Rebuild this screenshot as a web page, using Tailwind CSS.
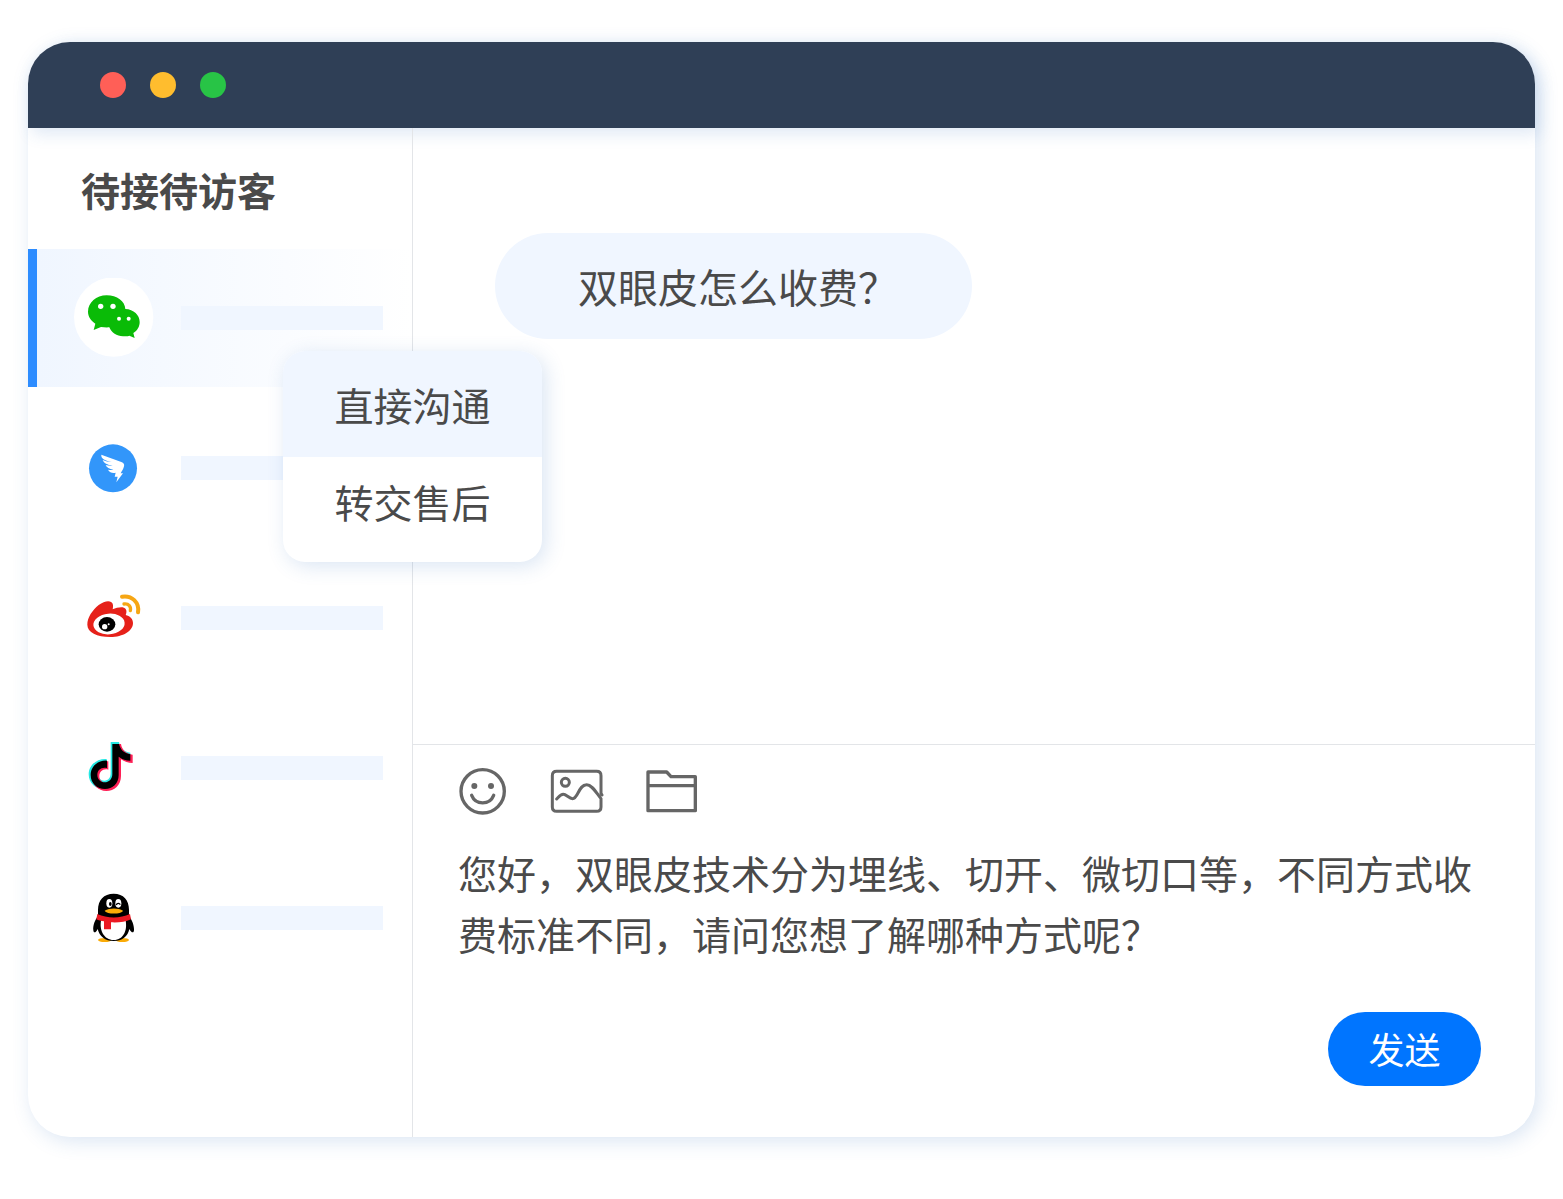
<!DOCTYPE html>
<html lang="zh-CN">
<head>
    <meta charset="UTF-8">
    <meta name="viewport" content="width=device-width, initial-scale=1.0">
    <title>在线客服</title>
    <script src="https://cdn.jsdelivr.net/npm/@tailwindcss/browser@4"></script>
</head>
<body class="bg-white font-['Noto_Sans_CJK_SC',sans-serif] text-[#4a4a4a] min-h-screen flex flex-col px-7 pt-[42px] pb-[62px]">
    <div class="flex-1 flex flex-col rounded-[42px] bg-white shadow-[4px_4px_20px_rgba(50,110,190,0.18)]">
        <!-- Title bar -->
        <header class="relative z-10 h-[86px] shrink-0 flex items-center gap-6 pl-[72px] rounded-t-[42px] bg-[#2f3f56] shadow-[4px_6px_16px_rgba(50,110,190,0.15)]">
            <span class="size-[26px] rounded-full bg-[#ff5f57]"></span>
            <span class="size-[26px] rounded-full bg-[#ffbd2e]"></span>
            <span class="size-[26px] rounded-full bg-[#28c446]"></span>
        </header>

        <div class="flex-1 flex">
            <!-- Visitor list -->
            <aside class="relative z-20 w-[385px] shrink-0 border-r border-[#e3e5e8]">
                <h1 class="h-[121px] pt-[33px] pl-[53px] text-[39px] leading-[56px] font-bold">待接待访客</h1>
                <ul class="flex flex-col gap-3">
                    <li class="relative h-[138px] flex items-center border-l-[9px] border-[#2d8cff] pl-[37px] pr-[29px] bg-linear-to-r from-[#f0f6ff] to-white">
                        <svg class="size-20 mr-[27px] shrink-0" viewBox="42 24 240 240" role="img" aria-label="微信">
                            <circle cx="161" cy="141" r="119" fill="#fff"/>
                            <path fill="#0abb07" d="M140 76c31 0 55 18 56 41 25 1 43 18 43 39 0 14-7 26-19 33l4 15-16-7c-6 2-13 2-19 2-19 0-34-11-41-27-8 1-17 0-25-1l-22 9 5-19c-13-9-22-21-22-36 0-27 25-49 56-49z"/>
                            <g fill="#fff">
                                <circle cx="122" cy="109" r="8"/>
                                <circle cx="159" cy="109" r="8"/>
                                <circle cx="177" cy="146" r="6"/>
                                <circle cx="206" cy="146" r="6"/>
                            </g>
                        </svg>
                        <span class="h-6 flex-1 bg-[#f0f6ff]"></span>

                        <!-- Row menu -->
                        <div class="absolute left-[246px] top-[102px] w-[259px] rounded-[22px] overflow-hidden bg-white text-[39px] leading-[58px] shadow-[4px_4px_20px_rgba(50,110,190,0.18)]">
                            <button type="button" class="block w-full pt-6 pb-6 bg-[#f0f6ff]">直接沟通</button>
                            <button type="button" class="block w-full pt-[15px] pb-8">转交售后</button>
                        </div>
                    </li>
                    <li class="h-[138px] flex items-center pl-[46px] pr-[29px]">
                        <svg class="size-20 mr-[27px] shrink-0" viewBox="-3 -21 240 240" role="img" aria-label="钉钉">
                            <circle cx="114" cy="100" r="72" fill="#3296fa"/>
                            <path fill="#fff" d="M79 59l60 22c7 3 10 7 8 13-2 8-6 14-10 21h7l-20 27 4-17h-9l3-12c-9 3-18-1-23-9 7 1 12 1 16 0-12-1-20-7-23-14 6 2 14 3 21 2-16-2-27-8-30-17 8 4 18 6 27 6-18-4-33-9-31-22z"/>
                        </svg>
                        <span class="h-6 flex-1 bg-[#f0f6ff]"></span>
                    </li>
                    <li class="h-[138px] flex items-center pl-[46px] pr-[29px]">
                        <svg class="size-20 mr-[27px] shrink-0" viewBox="-3 -21 240 240" role="img" aria-label="微博">
                            <path fill="#e6211a" d="M37 119c0-22 15-43 34-59 18-14 38-15 42-4 2 6 1 12 0 17 14-6 33-10 39-1 4 6 2 13 0 18 12 3 22 11 22 24 0 24-30 42-68 42-40 0-69-14-69-37z"/>
                            <ellipse cx="102" cy="117" rx="47" ry="31" fill="#fff" transform="rotate(-5 102 117)"/>
                            <ellipse cx="96" cy="118" rx="25" ry="22" fill="#000"/>
                            <circle cx="89" cy="125" r="8" fill="#fff"/>
                            <circle cx="101" cy="118" r="3" fill="#fff"/>
                            <g fill="none" stroke="#f6a614" stroke-linecap="round">
                                <path stroke-width="12" d="M141 35c29-5 53 17 48 47"/>
                                <path stroke-width="10" d="M147 57c14-2 22 8 19 20"/>
                            </g>
                        </svg>
                        <span class="h-6 flex-1 bg-[#f0f6ff]"></span>
                    </li>
                    <li class="h-[138px] flex items-center pl-[46px] pr-[29px]">
                        <svg class="size-20 mr-[27px] shrink-0" viewBox="-3 -21 240 240" role="img" aria-label="抖音">
                            <path fill="#25e8e4" d="M107 21h25c3 18 15 30 34 32v24c-13 0-24-4-34-11v52c0 27-20 45-43 45-26 0-48-18-48-45 0-28 25-48 54-46v25c-16-4-27 6-27 20 0 12 9 20 20 20 12 0 19-9 19-22z"/>
                            <path fill="#fe1f55" d="M114 27h24c3 18 15 30 35 32v25c-13 0-25-4-35-11v50c0 27-20 45-44 45-25 0-43-18-43-44 0-26 21-46 49-45v25c-16-4-27 6-27 20 0 12 9 20 20 20 12 0 21-9 21-22z"/>
                            <path fill="#000" d="M112 27h20c4 17 15 28 34 31v19c-13 0-25-4-35-12v55c0 26-18 42-41 42-24 0-43-17-43-42s21-45 49-43v22c-17-4-29 6-29 21 0 13 10 22 22 22s23-9 23-25z"/>
                        </svg>
                        <span class="h-6 flex-1 bg-[#f0f6ff]"></span>
                    </li>
                    <li class="h-[138px] flex items-center pl-[46px] pr-[29px]">
                        <svg class="size-20 mr-[27px] shrink-0" viewBox="-3 -21 240 240" role="img" aria-label="QQ">
                            <ellipse cx="89" cy="165" rx="20" ry="6" fill="#faab07"/>
                            <ellipse cx="142" cy="165" rx="20" ry="6" fill="#faab07"/>
                            <path d="M116 26c30 0 46 20 46 48v18c9 13 16 29 15 44-1 10-8 7-14-4-4 22-22 36-47 36s-43-14-48-36c-5 11-12 14-13 4-2-15 5-31 14-44V74c0-28 17-48 47-48z"/>
                            <path fill="#fff" d="M79 102h72c8 34-6 63-35 63s-45-29-37-63z"/>
                            <path fill="#eb1923" d="M67 87c30 14 68 14 98 0l3 16c-17 8-37 10-60 9v21H87v-24c-9-1-17-3-23-6z"/>
                            <path fill="#faab07" d="M89 77c15-9 41-9 55 0-5 11-48 12-55 0z"/>
                            <ellipse cx="103" cy="55" rx="9" ry="13" fill="#fff"/>
                            <ellipse cx="130" cy="55" rx="9" ry="13" fill="#fff"/>
                            <ellipse cx="106" cy="57" rx="4" ry="6"/>
                            <path fill="none" stroke="#000" stroke-width="4" d="M124 60c2-6 9-6 12-1"/>
                        </svg>
                        <span class="h-6 flex-1 bg-[#f0f6ff]"></span>
                    </li>
                </ul>
            </aside>

            <main class="flex-1 min-w-0 flex flex-col">
                <!-- Messages -->
                <section class="flex-1 pt-[105px] pl-[82px]">
                    <p class="w-fit rounded-full bg-[#f0f6ff] pl-[83px] pr-[74px] py-6 text-[40px] leading-[58px]">双眼皮怎么收费？</p>
                </section>

                <!-- Reply box -->
                <form class="border-t border-[#e3e5e8] pt-[22px] pl-[45px] pr-[54px] pb-[51px] flex flex-col">
                    <div class="flex gap-[42px] text-[#666]">
                        <button type="button" aria-label="表情">
                            <svg class="w-12 h-12" viewBox="39 36 144 144" fill="none" stroke="currentColor" stroke-width="10" stroke-linecap="round">
                                <circle cx="113" cy="109" r="65"/>
                                <circle cx="88" cy="93" r="9" fill="currentColor" stroke="none"/>
                                <circle cx="138" cy="93" r="9" fill="currentColor" stroke="none"/>
                                <path d="M80 121c12 30 54 30 66 0"/>
                            </svg>
                        </button>
                        <button type="button" aria-label="图片">
                            <svg class="w-14 h-12" viewBox="309 36 168 144" fill="none" stroke="currentColor" stroke-width="9" stroke-linecap="round">
                                <path d="M471 120l-3-5V62q0-13-13-13H335q-13 0-13 13v94q0 13 13 13h120q13 0 13-13v-25c-14-17-27-42-43-42-24 0-26 42-42 42-11 0-19-13-28-13-9 0-14 8-20 14"/>
                                <circle cx="361" cy="82" r="12"/>
                            </svg>
                        </button>
                        <button type="button" aria-label="文件">
                            <svg class="w-[54px] h-12" viewBox="603 36 162 144" fill="none" stroke="currentColor" stroke-width="10" stroke-linejoin="round">
                                <path d="M609 51h56l13 14h73v102H609zM609 92h142"/>
                            </svg>
                        </button>
                    </div>
                    <textarea aria-label="回复内容" rows="2" class="mt-[27px] h-[122px] w-full resize-none overflow-hidden outline-none text-[39px] leading-[61px]">您好，双眼皮技术分为埋线、切开、微切口等，不同方式收费标准不同，请问您想了解哪种方式呢？</textarea>
                    <button type="submit" class="mt-12 self-end w-[153px] h-[74px] pb-[3px] rounded-full bg-[#0075ff] text-white text-[36px] leading-none">发送</button>
                </form>
            </main>
        </div>
    </div>
</body>
</html>
